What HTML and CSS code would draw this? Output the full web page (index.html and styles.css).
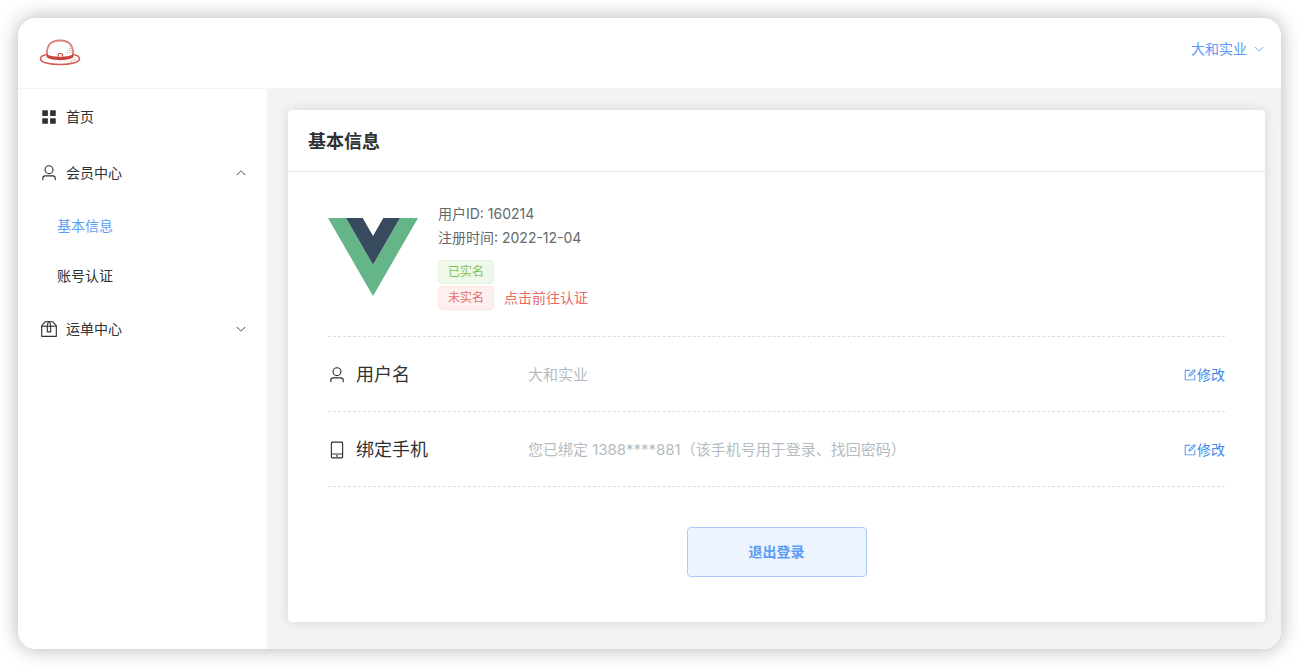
FILE: index.html
```html
<!DOCTYPE html>
<html lang="zh-CN">
<head>
<meta charset="utf-8">
<meta name="viewport" content="width=device-width, initial-scale=1">
<title>基本信息</title>
<link rel="stylesheet" href="styles.css">
</head>
<body>
<svg class="sprite" aria-hidden="true">
  <symbol id="arrow" viewBox="0 0 1024 1024"><path d="M831.872 340.864 512 652.672 192.128 340.864a30.592 30.592 0 0 0-42.752 0 29.12 29.12 0 0 0 0 41.6L489.664 714.24a32 32 0 0 0 44.672 0l340.288-331.712a29.12 29.12 0 0 0 0-41.728 30.592 30.592 0 0 0-42.752 0z"/></symbol>
  <symbol id="user" viewBox="0 0 1024 1024"><path d="M512 512a192 192 0 1 0 0-384 192 192 0 0 0 0 384zm0 64a256 256 0 1 1 0-512 256 256 0 0 1 0 512zm320 320v-96a96 96 0 0 0-96-96H288a96 96 0 0 0-96 96v96a32 32 0 1 1-64 0v-96a160 160 0 0 1 160-160h448a160 160 0 0 1 160 160v96a32 32 0 1 1-64 0z"/></symbol>
  <symbol id="grid" viewBox="0 0 1024 1024"><rect x="128" y="128" width="320" height="320" rx="32"/><rect x="576" y="128" width="320" height="320" rx="32"/><rect x="128" y="576" width="320" height="320" rx="32"/><rect x="576" y="576" width="320" height="320" rx="32"/></symbol>
  <symbol id="box" viewBox="0 0 1024 1024"><path d="M317.056 128 128 344.064V896h768V344.064L706.944 128H317.056zm-14.528-64h418.944a32 32 0 0 1 24.064 10.88l206.528 236.096A32 32 0 0 1 960 332.032V928a32 32 0 0 1-32 32H96a32 32 0 0 1-32-32V332.032a32 32 0 0 1 7.936-21.12L278.4 75.008A32 32 0 0 1 302.528 64z"/><path d="M64 320h896v64H64z"/><path d="M448 327.872V640h128V327.872L526.08 128h-28.16L448 327.872zM448 64h128l64 256v352a32 32 0 0 1-32 32H416a32 32 0 0 1-32-32V320l64-256z"/></symbol>
  <symbol id="phone" viewBox="0 0 1024 1024"><path d="M224 768v96a64 64 0 0 0 64 64h448a64 64 0 0 0 64-64v-96H224zm0-64h576V160a64 64 0 0 0-64-64H288a64 64 0 0 0-64 64v544zm32 288a96 96 0 0 1-96-96V128a96 96 0 0 1 96-96h512a96 96 0 0 1 96 96v768a96 96 0 0 1-96 96H256zm304-144a48 48 0 1 1-96 0 48 48 0 0 1 96 0z"/></symbol>
  <symbol id="edit" viewBox="0 0 1024 1024"><path d="M832 512a32 32 0 1 1 64 0v352a32 32 0 0 1-32 32H160a32 32 0 0 1-32-32V160a32 32 0 0 1 32-32h352a32 32 0 0 1 0 64H192v640h640V512z"/><path d="m469.952 554.24 52.8-7.552L847.104 222.4a32 32 0 1 0-45.248-45.248L477.44 501.44l-7.552 52.8zm422.4-422.4a96 96 0 0 1 0 135.808l-331.84 331.84a32 32 0 0 1-18.112 9.088L436.8 623.68a32 32 0 0 1-36.224-36.224l15.104-105.6a32 32 0 0 1 9.024-18.112l331.904-331.84a96 96 0 0 1 135.744 0z"/></symbol>
</svg>
<div class="app">
  <header class="topbar">
    <a class="logo" href="#" aria-label="首页">
      <svg viewBox="0 0 42 28" fill="none" stroke="#cf4a44">
        <path d="M8.500 18C7.500 14 8 9.500 10 6C12.500 2.500 16 1.500 21 1.500S29.500 2.500 32 6C34 9.500 34.500 14 33.500 18" stroke-width="1.800" opacity=".7"/>
        <path d="M8.500 15.500C4 16 1.500 17.500 1.500 19.700C1.500 23.500 10.500 25.500 21 25.500S40.500 23.500 40.500 19.700C40.500 17.500 38 16 33.500 15.500" stroke-width="1.600" opacity=".9"/>
        <path d="M8 15.500C14 18.500 28 18.500 34 15.500V18.500C29 22 13 22 8 18.500Z" fill="#c9433d" stroke="none"/>
        <path d="M19.200 17.500V15Q21.500 13.800 23.500 15.500V17.500" stroke-width="1.200"/>
        <path d="M19.800 17.600V15.800Q21.500 15 22.800 16V17.600Z" fill="#fff" stroke="none"/>
        <path d="M30.500 7V15M28.500 11V15M32 9V15M29 23L36 20M32 23L38 20.500" stroke-width="1" stroke-dasharray="1 1" opacity=".5"/>
      </svg>
    </a>
    <button class="account" type="button">大和实业<svg class="icon"><use href="#arrow"/></svg></button>
  </header>
  <div class="body">
    <nav class="sidebar" aria-label="主菜单">
      <a class="item" href="#"><svg class="icon"><use href="#grid"/></svg><span>首页</span></a>
      <button class="item" type="button" aria-expanded="true"><svg class="icon"><use href="#user"/></svg><span>会员中心</span><svg class="icon caret up"><use href="#arrow"/></svg></button>
      <div class="submenu">
        <a class="active" href="#" aria-current="page">基本信息</a>
        <a href="#">账号认证</a>
      </div>
      <button class="item" type="button" aria-expanded="false"><svg class="icon"><use href="#box"/></svg><span>运单中心</span><svg class="icon caret"><use href="#arrow"/></svg></button>
    </nav>
    <main class="content">
      <section class="card">
        <h1 class="card-title">基本信息</h1>
        <div class="card-body">
          <div class="profile">
            <svg class="avatar" viewBox="0 0 90 80" role="img" aria-label="头像"><path fill="#64b587" d="M0 2H18L45 48.700 72 2H90L45 80z"/><path fill="#384a5e" d="M18 2H34.700L45 20 55.300 2H72L45 48.700z"/></svg>
            <div class="facts">
              <p>用户ID: 160214</p>
              <p>注册时间: 2022-12-04</p>
              <div class="tags">
                <div><span class="tag success">已实名</span></div>
                <div><span class="tag danger">未实名</span><a class="verify" href="#">点击前往认证</a></div>
              </div>
            </div>
          </div>
          <div class="row">
            <div class="label"><svg class="icon"><use href="#user"/></svg>用户名</div>
            <div class="value">大和实业</div>
            <button class="edit" type="button"><svg class="icon"><use href="#edit"/></svg>修改</button>
          </div>
          <div class="row">
            <div class="label"><svg class="icon"><use href="#phone"/></svg>绑定手机</div>
            <div class="value">您已绑定 1388****881（该手机号用于登录、找回密码）</div>
            <button class="edit" type="button"><svg class="icon"><use href="#edit"/></svg>修改</button>
          </div>
          <button class="logout" type="button">退出登录</button>
        </div>
      </section>
    </main>
  </div>
</div>
</body>
</html>
```
FILE: styles.css
```css
* { box-sizing: border-box; }
body {
  margin: 0;
  min-height: 100vh;
  padding: 18px;
  display: flex;
  background: #fff;
  color: #303133;
  font: 14px/24px Inter, "Noto Sans CJK SC", sans-serif;
}
a { color: inherit; text-decoration: none; }
button { margin: 0; padding: 0; border: 0; background: none; color: inherit; font: inherit; cursor: pointer; }
.sprite { display: none; }
.icon { width: 18px; height: 18px; fill: currentColor; flex: none; }
.app {
  flex: 1;
  min-width: 0;
  display: flex;
  flex-direction: column;
  border-radius: 18px;
  overflow: hidden;
  box-shadow: 0 0 20px rgba(0, 0, 0, .3);
}
.topbar {
  height: 71px;
  padding: 0 16px 0 21px;
  display: flex;
  align-items: center;
  justify-content: space-between;
  border-bottom: 1px solid #f3f3f3;
  background: #fff;
}
.logo svg { display: block; width: 42px; height: 28px; }
.account { display: flex; align-items: center; gap: 6px; padding-bottom: 8px; color: #5a9cf8; }
.account .icon { width: 12px; height: 12px; }
.body { flex: 1; display: flex; }
.sidebar { width: 249px; flex: none; background: #fff; }
.item {
  width: 100%;
  height: 56px;
  padding: 0 20px 0 22px;
  display: flex;
  align-items: center;
  gap: 8px;
}
.caret { width: 12px; height: 12px; margin-left: auto; }
.up { transform: rotate(180deg); }
.submenu a { display: flex; align-items: center; height: 50px; padding-left: 39px; }
.submenu .active { color: #5a9cf8; }
.content { flex: 1; min-width: 0; padding: 21px 16px 27px 21px; background: #f3f3f3; }
.card { height: 100%; border-radius: 4px; background: #fff; box-shadow: 0 0 12px rgba(0, 0, 0, .12); }
.card-title {
  margin: 0;
  padding: 20px 20px 17px;
  border-bottom: 1px solid #e6e7ea;
  font-size: 18px;
  line-height: 24px;
  font-weight: 700;
}
.card-body { padding: 30px 40px; display: flex; flex-direction: column; }
.profile { display: flex; align-items: center; gap: 20px; padding-bottom: 26px; border-bottom: 1px dashed #dcdfe0; }
.avatar { width: 90px; height: 80px; }
.facts { color: #606a6d; }
.facts p { margin: 0; }
.tags { display: grid; gap: 2px; margin-top: 10px; }
.tags div { display: flex; align-items: center; gap: 10px; }
.tag { height: 24px; padding: 0 9px; border: 1px solid; border-radius: 4px; font-size: 12px; line-height: 22px; }
.success { color: #7bc351; border-color: #e1f3d8; background: #f0f8eb; }
.danger { color: #e66f6c; border-color: #fde2e2; background: #fdf0ef; }
.verify { color: #e86965; }
.row { min-height: 75px; padding-top: 2px; display: flex; align-items: center; border-bottom: 1px dashed #dcdfe0; }
.label { width: 200px; flex: none; display: flex; align-items: center; gap: 10px; font-size: 18px; }
.value { flex: 1; color: #b4bcc1; font-size: 15px; }
.edit { display: flex; align-items: center; color: #3f88ee; }
.edit .icon { width: 14px; height: 14px; }
.logout {
  align-self: center;
  width: 180px;
  height: 50px;
  margin-top: 40px;
  border: 1px solid #a9ccfb;
  border-radius: 4px;
  background: #edf4fe;
  color: #5a9cf8;
  font-weight: 600;
}
```
